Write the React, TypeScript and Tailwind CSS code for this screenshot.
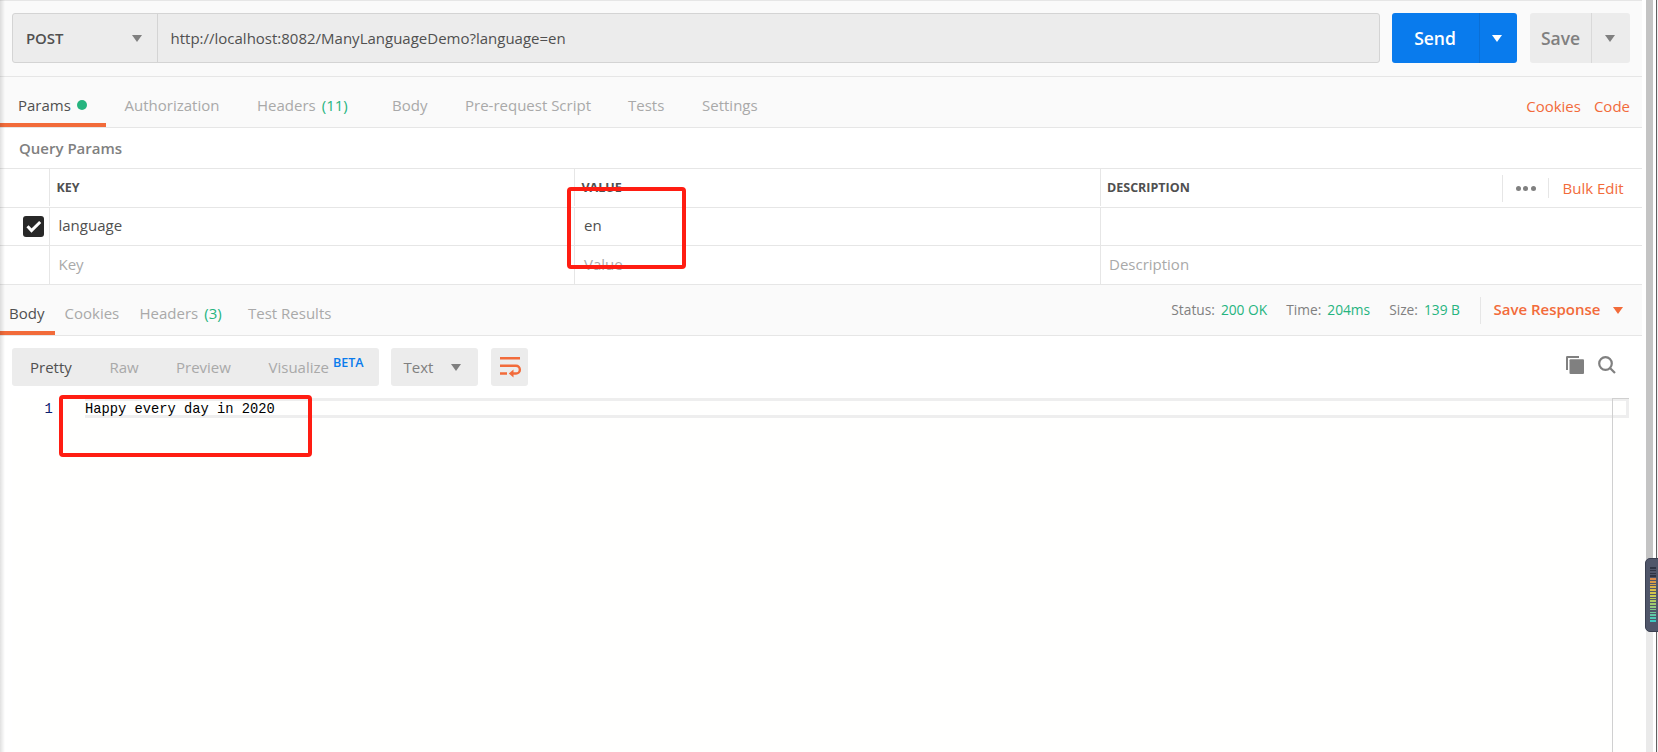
import type { ReactNode } from 'react';

import { clsx } from 'clsx';

type TabItem = {
  label: string;
  count?: string;
  dot?: boolean;
  className: string;
};

const REQUEST_TABS: TabItem[] = [
  { label: 'Params', dot: true, className: 'w-[106px] pl-[18px]' },
  { label: 'Authorization', className: 'w-[132px] pl-[18.5px]' },
  { label: 'Headers', count: '(11)', className: 'w-[135px] pl-[19px]' },
  { label: 'Body', className: 'w-[73px] pl-[19px]' },
  { label: 'Pre-request Script', className: 'w-[163px] pl-[19px]' },
  { label: 'Tests', className: 'w-[74px] pl-[19px]' },
  { label: 'Settings', className: 'w-[95px] pl-[19px]' },
];

const RESPONSE_TABS: TabItem[] = [
  { label: 'Body', className: 'w-[55px] pl-[9px]' },
  { label: 'Cookies', className: 'w-[75px] pl-[9.5px]' },
  { label: 'Headers', count: '(3)', className: 'w-[109px] pl-[9.5px]' },
  { label: 'Test Results', className: 'w-[102px] pl-[9px]' },
];

const METRICS = [
  { label: 'Status:', value: '200 OK' },
  { label: 'Time:', value: '204ms' },
  { label: 'Size:', value: '139 B' },
];

const METER_COLORS = [
  'bg-[#2f3444]',
  'bg-[#2f3444]',
  'bg-[#2f3444]',
  'bg-[#2f3444]',
  'bg-[#d98a4a]',
  'bg-[#d99a48]',
  'bg-[#d9a648]',
  'bg-[#d6b24a]',
  'bg-[#d6bd4a]',
  'bg-[#d2c64c]',
  'bg-[#c8c950]',
  'bg-[#bccb57]',
  'bg-[#aecb62]',
  'bg-[#9fca6e]',
  'bg-[#90c97c]',
  'bg-[#80c88a]',
  'bg-[#70c898]',
  'bg-[#60c8a6]',
  'bg-[#4fc9b4]',
  'bg-[#3dcac2]',
];

function Caret({ className }: { className?: string }) {
  return (
    <svg viewBox="0 0 10 7" className={clsx('h-[7px] w-[10px] shrink-0 fill-current', className)}>
      <path d="M0 0h10L5 7z" />
    </svg>
  );
}

function Tab({ tab, active }: { tab: TabItem; active: boolean }) {
  return (
    <div
      className={clsx(
        'flex shrink-0 items-center whitespace-nowrap border-b-4',
        active ? 'border-[#f26b3a] text-[#505050]' : 'border-transparent text-[#a9a9a9]',
        tab.className
      )}
    >
      {tab.label}
      {tab.dot ? <span className="ml-1.5 size-[10px] rounded-full bg-[#26b47f]" /> : null}
      {tab.count ? <span className="ml-1.5 text-[#26b47f]">{tab.count}</span> : null}
    </div>
  );
}

function RequestBar() {
  return (
    <div className="flex h-[77px] border-y border-[#e6e6e6] bg-[#fafafa] pl-3 pt-3">
      <div className="flex h-[50px] w-[1368px] rounded-[3px] border border-[#d4d4d4] bg-[#ececec]">
        <div className="flex w-[145px] items-center justify-between border-r border-[#d4d4d4] pl-[13px] pr-[15px]">
          <span className="font-semibold tracking-[-0.1px] text-[#505050]">POST</span>
          <Caret className="text-[#808080]" />
        </div>
        <div className="flex items-center pl-[12.5px] text-[#505050]">
          http://localhost:8082/ManyLanguageDemo?language=en
        </div>
      </div>
      <div className="ml-3 flex h-[50px] w-[125px] rounded-[3px] bg-[#097bed] text-[17.5px] font-semibold text-white">
        <div className="flex w-[88px] items-center justify-center border-r border-[#0a6fd6] pr-px">Send</div>
        <div className="flex flex-1 items-center pl-3">
          <Caret />
        </div>
      </div>
      <div className="ml-[13px] flex h-[50px] w-[100px] rounded-[3px] bg-[#ececec] text-[17.5px] font-semibold text-[#808080]">
        <div className="flex w-[62px] items-center justify-center border-r border-[#d9d9d9]">Save</div>
        <div className="flex flex-1 items-center pl-[13px]">
          <Caret />
        </div>
      </div>
    </div>
  );
}

function RequestTabs() {
  return (
    <div className="flex h-[51px] border-b border-[#e6e6e6] bg-[#fafafa]">
      <div className="flex [&>div]:pt-[9px]">
        {REQUEST_TABS.map((tab, index) => (
          <Tab key={tab.label} tab={tab} active={index === 0} />
        ))}
      </div>
      <div className="ml-auto flex items-center gap-[13px] pr-3 pt-[7px] leading-5 text-[#f26b3a]">
        <span>Cookies</span>
        <span>Code</span>
      </div>
    </div>
  );
}

function Cell({ children, className = 'pl-[9px]' }: { children?: ReactNode; className?: string }) {
  return (
    <div className={clsx('flex items-center border-r border-[#e6e6e6]', className)}>
      {children}
    </div>
  );
}

const ROW_CLASS = 'grid grid-cols-[50px_525px_526px_541px] border-b border-[#e6e6e6]';
const HEAD_CLASS = 'mb-px pl-[6.5px] text-[12.5px] font-bold text-[#505050]';

function ParamsTable() {
  return (
    <div className="bg-white">
      <div className="flex h-[41px] items-center border-b border-[#e6e6e6] pl-[19px] font-semibold text-[#808080]">
        Query Params
      </div>
      <div className={clsx(ROW_CLASS, 'h-[39px]')}>
        <Cell className="mb-px" />
        <Cell className={HEAD_CLASS}>KEY</Cell>
        <Cell className={HEAD_CLASS}>VALUE</Cell>
        <div className="flex items-center pl-[6px]">
          <span className="pb-px text-[12.5px] font-bold text-[#505050]">DESCRIPTION</span>
          <div className="ml-auto flex h-[27px] w-[46px] items-center justify-center gap-[2.5px] border-l border-[#e6e6e6]">
            <span className="size-[5px] rounded-full bg-[#808080]" />
            <span className="size-[5px] rounded-full bg-[#808080]" />
            <span className="size-[5px] rounded-full bg-[#808080]" />
          </div>
          <div className="flex h-5 w-[94px] items-center border-l border-[#e6e6e6] pl-[13.5px] text-[#f26b3a]">
            Bulk Edit
          </div>
        </div>
      </div>
      <div className={clsx(ROW_CLASS, 'h-[38px] text-[#505050]')}>
        <Cell className="pl-[23px]">
          <span className="flex size-[21px] items-center justify-center rounded-[3px] bg-[#282828]">
            <svg viewBox="0 0 16 13" className="h-[13px] w-4 fill-none stroke-white stroke-3">
              <path d="M1.5 6.2l4 4.3 8.7-8.5" />
            </svg>
          </span>
        </Cell>
        <Cell className="pb-[3px] pl-[8.5px]">language</Cell>
        <Cell className="pb-[3px] pl-[9px]">en</Cell>
      </div>
      <div className={clsx(ROW_CLASS, 'h-[39px] text-[#a9a9a9]')}>
        <Cell />
        <Cell className="pb-0.5 pl-[8.5px]">Key</Cell>
        <Cell className="pb-0.5 pl-[9px]">Value</Cell>
        <div className="flex items-center pb-0.5 pl-2">Description</div>
      </div>
    </div>
  );
}

function ResponseTabs() {
  return (
    <div className="flex h-[51px] border-b border-[#e6e6e6] bg-[#fafafa]">
      <div className="flex [&>div]:pt-[9px]">
        {RESPONSE_TABS.map((tab, index) => (
          <Tab key={tab.label} tab={tab} active={index === 0} />
        ))}
      </div>
      <div className="ml-auto flex items-center text-[13.75px]">
        {METRICS.map((metric) => (
          <div key={metric.label} className="mr-[19px] flex gap-1.5 text-[#808080]">
            {metric.label}
            <span className="text-[#26b47f]">{metric.value}</span>
          </div>
        ))}
        <div className="ml-px flex h-[27px] w-[162px] items-center border-l border-[#e6e6e6] pl-[12.5px] text-[15px] font-semibold text-[#f26b3a]">
          <span className="pb-0.5">Save Response</span>
          <Caret className="ml-3" />
        </div>
      </div>
    </div>
  );
}

function ResponseToolbar() {
  return (
    <div className="flex h-[62px] pl-3 pt-3">
      <div className="flex h-[38px] w-[367px] items-center rounded-[3px] bg-[#ececec] pl-[18px] text-[#a9a9a9]">
        <span className="w-[79.5px] text-[#505050]">Pretty</span>
        <span className="w-[66.5px]">Raw</span>
        <span className="w-[92.5px]">Preview</span>
        <span>Visualize</span>
        <span className="mb-[9px] ml-1 text-[12.5px] font-semibold text-[#097bed]">BETA</span>
      </div>
      <div className="ml-3 flex h-[38px] w-[87px] items-center justify-between rounded-[3px] bg-[#ececec] pl-[12.5px] pr-[17px] text-[#808080]">
        Text
        <Caret />
      </div>
      <div className="ml-[13px] flex h-[38px] w-[37px] items-center justify-center rounded-[3px] bg-[#ececec]">
        <svg viewBox="0 0 20 20" className="size-5 overflow-visible fill-none stroke-[#f26b3a] stroke-[2.4]">
          <path d="M0 1.2h20M0 8.8h16a3.8 3.8 0 0 1 0 7.7H11.5M0 16.5h7" />
          <path d="M13.5 12.5L8.8 16.5l4.7 4z" className="fill-[#f26b3a] stroke-none" />
        </svg>
      </div>
      <div className="ml-auto flex gap-[14px] pr-[26px] pt-2 text-[#808080]">
        <svg viewBox="0 0 18 18" className="size-[18px] fill-current">
          <path d="M0 1.2Q0 0 1.2 0H13v2H2v12H0z" />
          <rect x="3.5" y="3.2" width="14.5" height="14.8" rx="1" />
        </svg>
        <svg viewBox="0 0 18 18" className="size-[18px] fill-none stroke-current stroke-[2.2]">
          <circle cx="7.5" cy="7.5" r="6.3" />
          <path d="M12 12l5 5" />
        </svg>
      </div>
    </div>
  );
}

function ResponseEditor() {
  return (
    <div className="ml-3 flex flex-1 bg-[#fffffe] font-['Liberation_Mono',monospace] text-[13.75px] leading-5">
      <div className="w-[73px] pl-[32.5px] pt-[1.5px] text-[#0b216f]">1</div>
      <div className="relative flex-1">
        <div className="mr-[13px] flex h-5 items-center whitespace-pre border-[3px] border-l-0 border-[#eeeeee] text-black">
          <span className="pt-[3px]">Happy every day in 2020</span>
        </div>
        <div className="absolute inset-y-0 right-[29px] w-px bg-[#d0d0d0]" />
        <div className="absolute right-[13px] top-0 h-px w-[17px] bg-[#d0d0d0]" />
      </div>
    </div>
  );
}

function ScrollGutter() {
  return (
    <div className="flex w-4 bg-white pl-1">
      <div className="flex w-[7px] flex-col bg-[#eaeaea]">
        <div className="h-[600px] bg-[#c4c4c4]" />
      </div>
      <div className="ml-[3px] w-px bg-[#606060]" />
      <div className="flex-1 bg-[#f0f0f0]" />
    </div>
  );
}

export default function App() {
  return (
    <div className="relative flex h-[752px] w-[1658px] overflow-hidden bg-white font-['Open_Sans',sans-serif] text-[15px] leading-5">
      <main className="flex w-[1642px] flex-col">
        <RequestBar />
        <RequestTabs />
        <ParamsTable />
        <ResponseTabs />
        <ResponseToolbar />
        <ResponseEditor />
      </main>
      <ScrollGutter />

      <div className="absolute inset-y-0 left-0 w-[5px] bg-linear-to-r from-black/12 to-transparent" />
      <div className="absolute left-[567px] top-[187px] h-[82px] w-[119px] rounded-[4px] border-4 border-[#ff1d12]" />
      <div className="absolute left-[59px] top-[395px] h-[62px] w-[253px] rounded-[4px] border-4 border-[#ff1d12]" />
      <div className="absolute left-[1645px] top-[558px] flex h-[74px] w-[20px] flex-col gap-[1.1px] rounded-[5px] border border-[#3a3f50] bg-[#50566a] pl-1 pt-2">
        {METER_COLORS.map((color, index) => (
          <span key={index} className={clsx('h-[1.7px] w-[6px] shrink-0', color)} />
        ))}
      </div>
    </div>
  );
}
